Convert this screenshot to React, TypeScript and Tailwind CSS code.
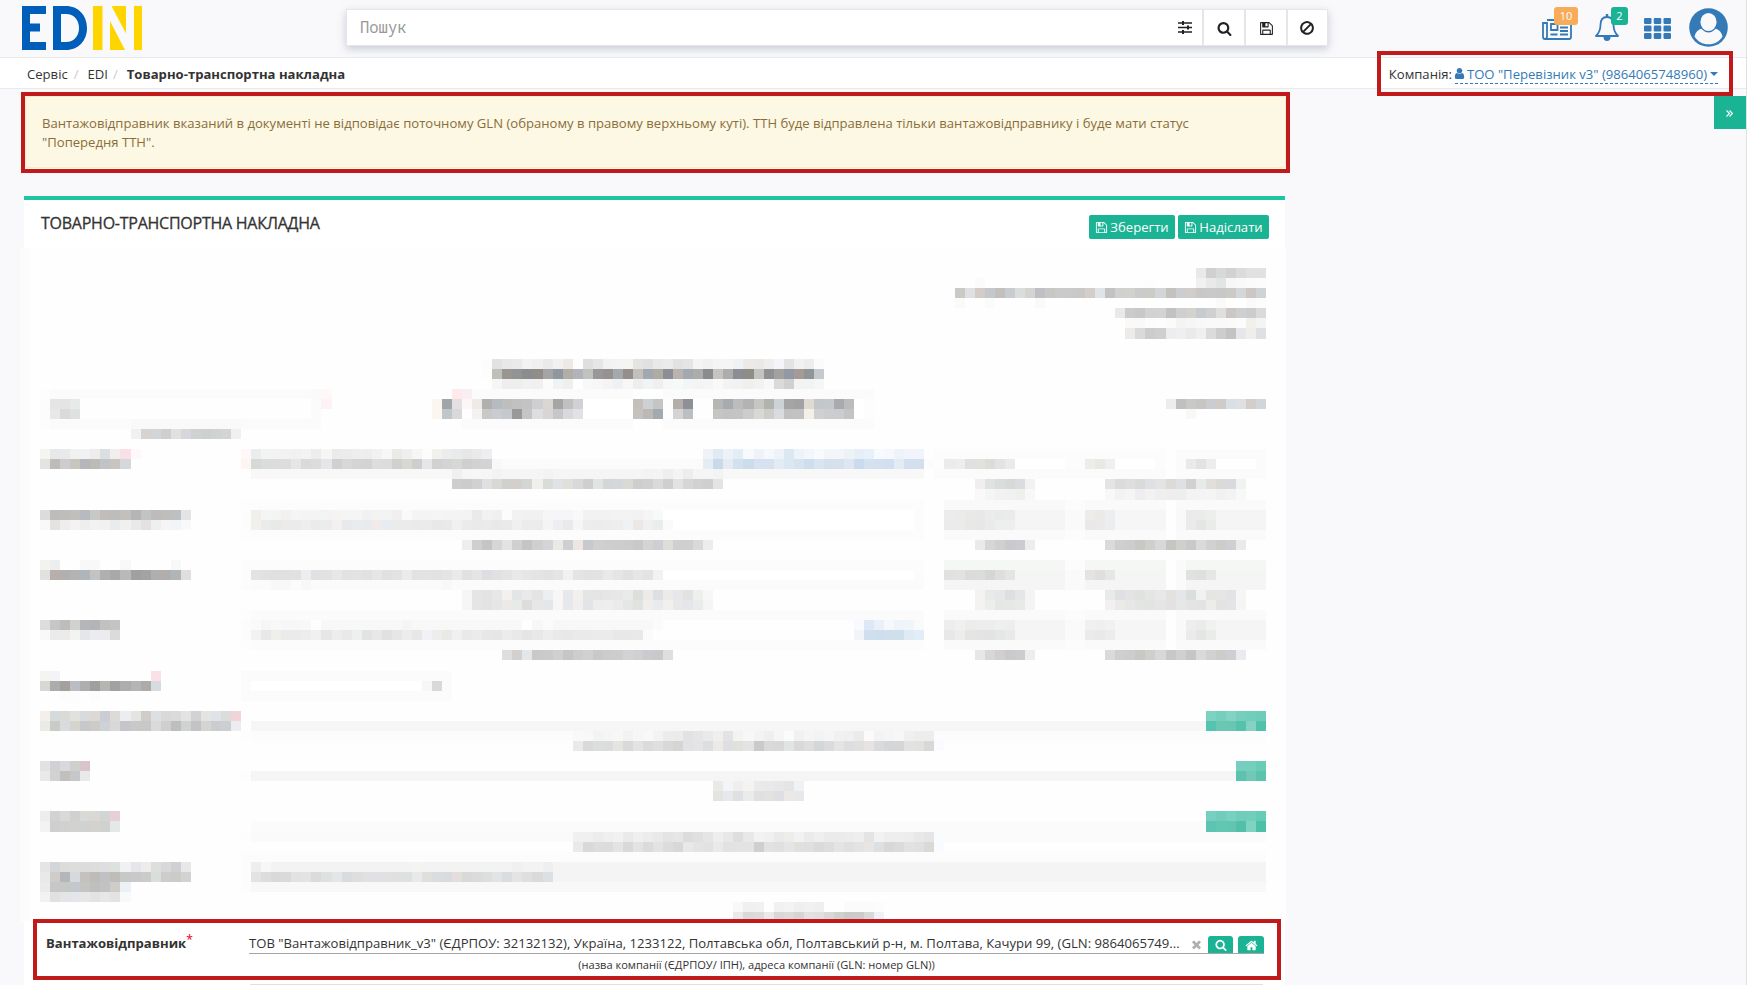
import React from "react";

const ICONS = {
  search:
    "M1216 832q0-185-131.5-316.5t-316.5-131.5-316.5 131.5-131.5 316.5 131.5 316.5 316.5 131.5 316.5-131.5 131.5-316.5zm512 832q0 52-38 90t-90 38q-54 0-90-38l-343-342q-179 124-399 124-143 0-273.5-55.5t-225-150-150-225-55.5-273.5 55.5-273.5 150-225 225-150 273.5-55.5 273.5 55.5 225 150 150 225 55.5 273.5q0 220-124 399l343 343q37 37 37 90z",
  floppy:
    "M512 1536h768v-384h-768v384zm896 0h128v-896q0-14-10-38.5t-20-34.5l-281-281q-10-10-34-20t-39-10v416q0 40-28 68t-68 28h-576q-40 0-68-28t-28-68v-416h-128v1280h128v-416q0-40 28-68t68-28h832q40 0 68 28t28 68v416zm-384-928v-320q0-13-9.5-22.5t-22.5-9.5h-192q-13 0-22.5 9.5t-9.5 22.5v320q0 13 9.5 22.5t22.5 9.5h192q13 0 22.5-9.5t9.5-22.5zm640 32v928q0 40-28 68t-68 28h-1344q-40 0-68-28t-28-68v-1344q0-40 28-68t68-28h928q40 0 88 20t76 48l280 280q28 28 48 76t20 88z",
  ban: "M1440 893q0-161-87-295l-754 753q137 89 297 89 111 0 211.5-43.5t173.5-116.5 116-174.5 43-212.5zm-999 299l755-754q-135-91-300-91-148 0-273 73t-198 199-73 274q0 162 89 299zm1223-299q0 157-61 300t-163.5 246-245 164-298.5 61-298.5-61-245-164-163.5-246-61-300 61-299.5 163.5-245.5 245-164 298.5-61 298.5 61 245 164 163.5 245.5 61 299.5z",
  user: "M1536 1399q0 109-62.5 187t-150.5 78h-854q-88 0-150.5-78t-62.5-187q0-85 8.5-160.5t31.5-152 58.5-131 94-89 134.5-34.5q131 128 313 128t313-128q76 0 134.5 34.5t94 89 58.5 131 31.5 152 8.5 160.5zm-256-887q0 159-112.5 271.5t-271.5 112.5-271.5-112.5-112.5-271.5 112.5-271.5 271.5-112.5 271.5 112.5 112.5 271.5z",
  home: "M1472 992v480q0 26-19 45t-45 19h-384v-384h-256v384h-384q-26 0-45-19t-19-45v-480q0-1 .5-3t.5-3l575-474 575 474q1 2 1 6zm223-69l-62 74q-8 9-21 11h-3q-13 0-21-7l-692-577-692 577q-12 8-24 7-13-2-21-11l-62-74q-8-10-7-23.5t11-21.5l719-599q32-26 76-26t76 26l244 204v-195q0-14 9-23t23-9h192q14 0 23 9t9 23v408l219 182q10 8 11 21.5t-7 23.5z",
  times:
    "M1490 1322q0 40-28 68l-136 136q-28 28-68 28t-68-28l-294-294-294 294q-28 28-68 28t-68-28l-136-136q-28-28-28-68t28-68l294-294-294-294q-28-28-28-68t28-68l136-136q28-28 68-28t68 28l294 294 294-294q28-28 68-28t68 28l136 136q28 28 28 68t-28 68l-294 294 294 294q28 28 28 68z",
};

function Icon({ name, className }: { name: keyof typeof ICONS; className: string }) {
  return (
    <svg viewBox="0 0 1792 1792" className={className} fill="currentColor">
      <path d={ICONS[name]} />
    </svg>
  );
}

/* Redacted form area. Each entry is one mosaic row: "column:shade shade*count ...",
   where a shade is a two-digit grey or a full hex colour. */
const MOSAIC: Record<number, string> = {
  2: "117:e9 d1d0cf d7dad8 d2 dadbdc e1 e1",
  3: "95:fb|112:fd|117:f1 e9e9ea e2e6e3 f7 f9 fb fc",
  4: "93:cbc9c6 dee0e3 d3ccc9 c5c8ca c2bfbc c8cccf dadddb d6d4d1 bfc0c4 c9c7c3 c9cbc9 c9 c8 d5cdc7 dfe4e9 c4c1c3 cfd1cf d1d1ce cb caccc8 d4d5d7 c4c2bf cbcdce d0cdca c8 c9 c8 cccac7 d4d6d8 ccc7c4 d0d3d5",
  5: "93:fa|96:fafcfb|101:fa|119:fa|122:fa fc",
  6: "109:e9 cacccb c8 d2 d3 c3c2c2 cfd0ce d4d2cf c8cbce d0 dfdfdd ccc7c4 cecfce cbcccd da",
  7: "110:faf9f8 f8f9f8 fc fd fb f4f4f2 f6 f8 f9 f9 fa fc f1f0ed f4f4f5",
  8: "110:ecebe9 dadad8 cc cf ecedee efeff1 ebeaea f0 dbdbd9 cccdcf c5c3c2 e6e7ea f0eeea dee0e3",
  11: "46:fdfcfa e1e2e3 e8 ebeae8 f3 f0 ebeaea eff1f3 ece9e7 fd df e6 f2 f3 f4f4f2 e5e4e3 dfe1e2 ebe9e7 eb e2 e4e5e6 f4 eff1f3 f5 f5 f0f1f3 ede9e7 ebe9e7 ee f4f5f8 e3 f2f1ef ed fafbfd",
  12: "46:fd c0c0bb 999593 929395 8b8c8e 918e8a a5a4a4 8f98a1 b2ada6 b3b4bb c0c2c0 989898 969190 a5a9ac 948f8d c2c0bb a0a9b1 aeaba3 8c8e94 b9b2ae a3a9ae ac 898b8e c5c4c3 adadab 8a8d94 8e8c87 c3c3c1 909192 a3a19f 9299a3 a59b96 909597 c6c9ce",
  13: "47:f6 ee eeeeec f1 f0 fb eff3f6 eff0ec fe f8 f7 f4 eef1f3 f8f6f6 eeeeec f1f4f7 ef f7 f6faf8 f2f6f4 f4 f5 f8faf8 f3 f2 efefec f2 f8 dbdad8 d0 f3 f2f4f3 f6",
  14: "2:fd fb*26 fa fff7f8|43:ffe9ea f8eef4 fb*16|64:fb*21",
  15: "2:fc e5 e4 e8eae9|29:fb fdf3f6|41:fcf5f0 9fa5a9 e5dfe1 fdf6f7 eeebe6 b0b0ae b5bbc1 be c1 c3c3c4 cdcfd1 d9d7d4 a5 c0 cfd1d4 ff*5 c5bfba cdd1d4 c4c5c5 fd b3aeaa 8d9195 fe fe b8b6b2 a8abae bcbcbe b3 c7c6c4 b2b2af cdd2d6 a5 a2 e1dad2 c4c7ca c5c8cb a9aaad bc ff fd|114:ed c0 c9c9c7 c8c6c4 cacccf d0cbc7 dadfe4 dee0e4 d5cdc9 d0d6da",
  16: "2:fc e8 dbdad9 dfe1e0|29:fb|41:fcf6f1 c1c7c8 d8d9da fe f2 cac8c6 c9ccd0 c5c8cc 999998 c5c5c7 dedee0 d8d6d4 c7c7c9 d9d9dd e2 ff*5 c6c1bd bbb8b5 a3aaaf fd d4 bdbebf fe fe c5 c3 c4 cd d8d8d4 cdcdca dadbde c1 c2 f5efe9 d0 cccdce cacccf c4 ff fd|116:f8",
  17: "2:fd fb*8 f9*11 fb*8|44:fb*17|64:fb*21",
  18: "11:f1 d5d4d3 d3d6d9 cf e3e1df d5d7da cfd1d2 ccd0cf d1d2d2 d3d5d4 f0",
  20: "2:f5f4f2 e6e8ea e9e9eb f1f2f0 eff1f3 eeedeb dbdfe3 f0efed f9e0e6 fef8fa|22:fef9f8 eaecee f3 f3 f2 f1 f3 ed f6 eb ec ee ed f1 f7 eaeae7 ef f6 fc f3f1ee ec e8eaeb e7 ea eceeef|68:eff3f8 dfeaf3 ecf2f8 e2edf4 f7f9fc edf3f9 f5f9fc edf3f8 dbe8f2 edf4f9 f2f7fb f8fafd f3f6f9 f2f5f9 edf2f7 e6eff7 e8f0fa f8fbfe f5f9fd edf3f9 f1f5fb f1f5fb|91:fc*23|115:fb*9",
  21: "2:e3e3e0 bebbb9 cdcdd0 c8c5bf b6b7bd bdbbb8 c2c3c6 c9c4c0 d4d8dd|22:fcf5f2 d5d9da dadcdc dbdddc dfdddc e5e7e6 dadbd8 dbdddd e5e6e9 cfd0d0 d8d8d9 d3d5d3 d2d3d5 dcddde dadcdd d0d0ce d8d7d4 cdcfce e5e6e9 d1 d2d4d5 d7d7d3 cf d3d2cf d3 f6f8fb fb*20 e5edf4 c8daea e4ebf3 d3e0ee cbdceb d6e2ef d7e2ef e4ecf3 dbe8f1 d7e3ed cddfee d8e4ef d4e0ec d6e1ee dde6f1 c9dbed d4e1ef d3e0f0 d0e0f0 e3ebf4 d2e0f0 d3dfed fbfdfd fd ebebe9 efedeb e0e1de e1e1de dddcda e3e4e2 e9ebe9 ff*5 fc fc eeece8 e9e8e5 efeff0 ff*4 fc fe fb ea e2e2e0 ebeeec ff*4 fb",
  22: "23:f8*20 f0 f6 f7 f6 f3 f5*4 f3 f5*9 f3 f4 ee f4 ed f5 f5 f3 f8*20|91:fb*23|115:fb*9",
  23: "43:cfcdd0 cccdcb d0d2d1 dfe0e1 d8d8d5 d0d0ce d2cfcc d4d6d6 efefeb dadcd9 e0e3e6 e1dfdc d7dad9 cf e2e4e4 d5d6d6 d5d8db d9d9d6 ce cfd1d0 d8dbd8 cf e1e2e1 d5d6d9 d1 cf e2e4e5|95:f0eeee dfe1e2 dbdddb d5d9d7 dadcdf f2|108:e3e4e3 dadbda de da dfe0e3 e4e5e2 dcdbd9 dfe0e4 d1d1d0 e6eae8 e0dfdc dadad7 d9dadf f1f3f1",
  24: "95:f9 f5 f2 f1 eef0ee f8|108:f8 f4f3f0 f5 efedef f2 ef ee ee f3 f4 f5 f1 f3 f8",
  25: "22:fd fc*67|92:f9*12 fc*2 fa*8|115:fa*9",
  26: "2:dc bebcbb bfbdbb c0bfbc b7bbbf c8c8c9 c0bdbb bdbdbc c1c0bd b5 c2c4c3 bebcbb bfbebd bdc0c1 e4|22:fc f1efec f3f6f4 f3f5f3 f1 f4f6f5 f4 f4 f3 f5f4f2 f5 f5 f1 f3 f3 f0 fa f4 f4 f5 f4 f4 f3 ea f2 f0 fc f2 f1 f1 f6 f4f6f9 f6 f9 f2 f2 f2 f3 f3 f2 f5 f6faf8 ff*25 fc|92:ec ecebe9 e9e9e7 e8e9e7 ebedec ea eb f5*5 fa*2 ecece8 ebeae8 eceeef f6*5|115:f9 eb ebebea edefed f5*5",
  27: "2:f9 e3 ee f4f3f1 ee f2 f1 eaebec f0 e9 e2 edf0ee f5 f1f5f8 f9|22:fc f2f0ed e9eceb e8eae9 ecebea eb ee eb ec f3f0ef e8e9ed e9ebed e8eaed f0ebea e8ebf0 eb eb ea eaeceb e8 e8eaea f0 eb ea eb e9 ea f0 ec ec f4 ee e9e9eb f5 ed ec ed ee eef2f5 ece8e5 f0 ec fa ff*24 fc|92:eb ecebe9 e8 e7 ea ecefed ecefed f5*5 fa*2 eae9e7 ea ebedee f6*5|115:f9 eb e4e5e4 eaecea f5*5",
  28: "22:fd fc*67|92:fa*12 fc*2 fa*8|115:fa*9",
  29: "44:ee cf c5 d6 e4e3e1 ced0d2 c5 cdcfd0 d4d5d8 e9e9e7 cdcfd3 eee6e3 c7c9cc d0 cfcecd cd cc c9 d5d4d0 cecfd3 deddd8 cf cf d9dad8 ed|95:ebeae8 d5d6d6 d2cfcf c9cacd cbcccf ed|108:da cdd0cf cccdcc c9c8c5 ced0ce d6d8d9 c6c5c2 cfcfce c8cac9 d8dadc d1d1cf cdccc9 cecfd1 e9ebe9",
  31: "2:f4f2ef eceef0|6:f8 f8|10:f8|15:f8|22:fc*68|92:f5f7f5*12 fc*2 f5f7f5*8|115:fa f5f7f5*8",
  32: "2:e1 b6afab b1b0ae b5b3b1 b0b5b9 c3 b2b0ae a8a9aa b9b9b7 a0 a3 b0aeae b1aeac b0b5b8 df|22:fc e4e3e3 e0e2e1 dfe1df e0 e1 ed dfe1e5 e2 e7 e2 e3 dfe1e4 e6 e1 e3 eb e2 e1e4e3 e2 e4 e8ebea e1 e5 dddee2 e1 e4 e9 e5e7e7 e4 e2 e5 eff2f0 e4 e0e2e3 e5e3e2 e9 e5 e1 e6 e3 f2 ff*25 fc|92:e1 e3e2e0 db dbdcdc d7d6d5 de e3e4e3 f5*5 fa*2 e3 e0dfde e5e6e6 f5*5|115:fa e1e1df df e4e7e4 f5*5",
  33: "22:fc fb fb f8 f8 fb f8 fb*13 f8 fb*47|92:f5*12 fa*2 f5*8|115:fa f5*8",
  34: "44:f6 e5 e3 e7 f3f1ef e3e6e9 e9 e4 eceef2 f7 e6e8ea f2f0ee e4e5e4 e4 e6 e7 e9ebea dedfdd ecebe8 dddfe2 ecebe7 e5e7ea e1e2e1 eef0ed f5f8f6|95:f5f3f1 e8eae9 e6e7e8 dfdfe1 e4e6e7 f4|108:e8eae9 dfe0e3 e3 e0e2e0 e4e6e6 e8 e3e2df e4e6ea dcdedb eef2f0 e5e5e2 e6e6e3 e1e3e6 f6",
  35: "44:f6 e4e6e5 e3 e5e7e6 eceae7 e8eae8 dddedc e7 e4e7ea f6 e6e8eb f1efee e3e4e7 ed ee eb e5e7e6 e1e3e1 efeeec e9eaed f1f0ed e8 e5e6ea eb f5|95:f5f3f1 eceeed e5e7e5 e6e8e7 e8eae8 f4|108:f1 ebeae9 e7 e3e5e2 e3e4e1 e5 e2 e7 e4 e3 ececea e3e4e1 e2e4e6 f5",
  36: "22:fd fb*67|92:fa*12 fc*2 fa*8|115:fa*9",
  37: "2:dedddc c6 bfbcba d0d2d0 b6b6b8 b4b4b8 c2c1bf c5c4c4|22:fc fa f6 f8 f7 f7 f8 fe f8*8 f5 f8*11 fe f7 fb f7 f8 f8*8 fb|83:f7fafe dce8f5 eaf0fa f6f8fd eff4fb f0f5fb f8fafc|92:ed eff0ef ec ed ed ef edefee f5*5 fa*2 f1f0ee ef eff1f3 f6*5|115:f9 ee ebebea f0f2f0 f5*5",
  38: "2:f9 eb ecebe9 f3 e5e6e7 ebecef ececee db|22:fc f2 e6e9e8 f0efec eb eb ed f0 e6e6e8 ed ebe9e7 edf0ee e2e4e3 e8 e1 e6 ec e7 f0f2f5 ed ebe9e6 f0 e9 eb e6e8e6 e6 ec e9 e5 e8 ed e9 e8 ea ea eb eb e8 e8 e9 fb|83:f1f5f9 cfdfed cddeec cfdfeb d0dfec e0eaf4 e2edf7|92:e8 ededeb e5e6e4 e4 e3 e5e7e6 e9 f5*5 fa*2 eb e9 ec f6*5|115:f9 eb e4e5e4 eaecea f5*5",
  39: "22:fd fc*67|92:fa*12 fc*2 fa*8|115:fa*9",
  40: "48:dededc d2d1cf e4e7e9 c9c9c6 cdcbca d0 c6c6c8 cd cfd1d3 c9 cc cd d2d3d6 d0 c9cbcf c9 dedfe0|95:e8e7e5 d6d7d7 d2cfce c9cac9 cbcccf ebeeec|108:da cdd0cf cccdcc c9c8c5 ced0ce d6d8d9 c9c8c5 d0 c5c6c7 d8dadc d1d1cf cdccc9 cecfd1 e9ebee",
  42: "2:f4f5f2 f3f4f8|13:fbe1e6|22:fb*21",
  43: "2:d7d7d6 ac a3a19c babdc4 ae 9f9f9f b6b5b1 a1a1a3 ad b3b5b9 aeaaa7 d5dbdf|22:fb ff*17 f7 d9 fb",
  44: "4:fc fc|7:fc|22:fb*21",
  46: "2:f3efed d6dadc dadad8 e2e1dd d9dadd dbd8d6 cacdd3 dddbd7 ecedef e5e4e2 cfcdca dde0e2 d8d9d9 db e3e4e1 d0d2d3 e4e4e2 dfe2e6 dbdddd f1d3da|118:7dd3c2 75cfbd 80d3c5 76cfbe 70cebb 6dcdba",
  47: "2:ebeae7 c9cbc7 d9dbde d5d4cf c6c8cc cdcbc8 ced1d6 d8 c4c6c9 c8cac8 cac8c6 da cdcfd0 be d0d1d3 c2c3c5 d4d4d1 cacccf cccfd2 ecedf0|23:f6*95 56c3ae 69c7b4 68c6b1 55c2ac 85d2c2 50c1aa",
  48: "22:fd fc*32 f9 f8 f3 f5 f7 f2 f6 f8 f3 ec eb e2 e5 ea ef e3 f2f4f3 f7 f3 ef f6 fb f1 f5 f3 f5 f0f2ef f0 eb fa f3 f5 f7 f0 ed ed fc*33",
  49: "55:eaeae8 d9 dcdedd dadcde e4e4e1 d8dad9 e3e3e1 db dee0dd d8 d5d6d3 e1e2e5 e4e4e6 dddee0 ece9e7 dedfe2 e0e0dd e3 c9cbcb d9 d9d8d9 e0e4e3 d9 dddedd d3d7d9 dbdbde e4 dcdee0 e0e0de e9e2e3 d8dadb d5d6d9 d6 e2e2e3 e2e1de d8d8d6 f9fbff",
  51: "2:e3e2e0 cfd1d4 d8d9dc cfd0ce dbc3cb|121:76cfbe 75cfbe 6accb7",
  52: "2:eae9e8 d2 c2bfbd c6c7cb e7e9eb|22:fd f5*98 5bc2ad 71c9b5 5cc3ad",
  53: "69:ebe9e7 f3f4f8 ef f4f3f0 ea eae9e9 e6e7e6 e4e5e4 f0f1f5",
  54: "69:e4e3e1 e6e8ea dfe0e2 eb e0 e2e3e1 dddfe3 ece8e6 e6e8ea",
  56: "2:eeedeb d1d2d2 d9 d0d1cf d8dad8 dad8d5 d3d5d4 e6cfd5|118:76d0bf 70cdbb 78d0c0 70cdbb 70cebb 67ccb7",
  57: "2:f3 cf d0d2d2 d2d3d0 d1 d3d2cf d0d2d0 e4e8e9|23:fb*95 5cc4b0 63c6b2 62c5b1 52c0a9 80d2c2 4dc0a8",
  58: "22:fd fa*32 f0 f0 ec ef f1 ea ef ec e9 e4 e6 dc e0 e5 ee e8 dddedf e8 f2 f0 ea eceeec f2 eb ef eb eb ec ee e4 f2 ee ee ed e8 e5 fafbfd fb*32",
  59: "55:eaeae8 d9 dcdedd dadcde e4e4e1 d8dad9 e3e3e1 db e2e4e2 dc d8 e8 e4 e2 ece9e7 e2 e3 e3 cdd0cf e0e3e0 e0 e5 e0e0dd df d8dadd dd e4 e0 e3 e9e5e3 dddfe1 d8 d9dbdc e2 e0 dad9d5 f9fbff",
  60: "22:fc*102",
  61: "2:e6e5e3 d3d6d9 dddcda dd dc dd de dde2e1 f1 e5e6e9 ececea de d8 cfd0d4 e8|22:fc ee f6f7f6 f3*14 f4f4f0 f3*9 f0 f3 f3 ef f4*71",
  62: "2:e9 cfcdca b4b6b9 d6d9dd c5c2be bdbcbb bfc1c5 bfbdba c7c9c8 c9 cb dadeda cd cbcbca d2|22:fc e3 dcdedd d7dad8 d9dad9 e2 e3 d9dbdc dee0e1 e4e7e6 dadbde de e1 dfe1e5 e3e1df e0 dde1df e9 e0dfdd dbdcdf d9dbde e3dedb d9dad7 db dcdfdd e1e3e6 dbdce0 e3e5e4 df dadbd9 dde0e3 f4*71",
  63: "2:eb c7 c6c8c6 c4c7cb c4c4c2 bfbfbc c2 cfcdca ecf1f5|22:fc f8*101",
  64: "2:f2 e1 e5 e5e6e9 e7 e2e3e6 e7 e3 f8f9fb",
  65: "71:f8 f0 f1 fd f1 f3 ef f1 ef|82:fb fb fb fc",
  66: "71:eae8e8 d9 db e9 d8 dadcda d6d5d3 e0e2e4 e0 d8 cfd1cb ca cb d8 eef1f5",
};

const COLUMN = 10.0485;
const ROW = 10.0605;
const COLUMNS = 126;
const ROWS = 67;

type Run = { width: number; color: string };

function parseRow(source: string | undefined): Run[] {
  const cells: string[] = new Array(COLUMNS).fill("#fefefe");
  cells[0] = "#fcfcfc";
  for (const part of (source ?? "").split("|").filter(Boolean)) {
    const [start, body] = part.split(":");
    let column = Number(start);
    for (const token of body.split(" ")) {
      const [shade, count] = token.split("*");
      const color = "#" + (shade.length === 2 ? shade.repeat(3) : shade);
      for (let i = 0; i < Number(count ?? 1) && column < COLUMNS - 2; i++) cells[column++] = color;
    }
  }
  const runs: Run[] = [];
  let from = 0;
  for (let c = 1; c <= COLUMNS; c++) {
    if (c === COLUMNS || cells[c] !== cells[from]) {
      runs.push({ width: Math.round(c * COLUMN) - Math.round(from * COLUMN), color: cells[from] });
      from = c;
    }
  }
  return runs;
}

function RedactedForm() {
  return (
    <div className="-ml-1 w-[1266px]" aria-hidden="true">
      {Array.from({ length: ROWS }, (_, n) => (
        <div key={n} className="flex" style={{ height: Math.round((n + 1) * ROW) - Math.round(n * ROW) }}>
          {parseRow(MOSAIC[n]).map((run, i) => (
            <div key={i} className="shrink-0" style={{ width: run.width, backgroundColor: run.color }} />
          ))}
        </div>
      ))}
    </div>
  );
}

function Logo() {
  return (
    <svg viewBox="0 0 120 44" className="mt-1.5 ml-[22px] h-11 w-[120px]">
      <path fill="#005ebb" d="M0 0h24v8H8v9.500h10v8H8V36h16v8H0z" />
      <path
        fill="#005ebb"
        fillRule="evenodd"
        d="M31 0h13c12 0 21 9 21 22s-9 22-21 22H31zM39 8v28h5c8 0 13-6 13-14S52 8 44 8z"
      />
      <path fill="#ffd500" d="M71 0h9.500v44H71zM89.500 0H104v27.500zM88 15v29h15zM112 0h8v44h-8z" />
    </svg>
  );
}

function SearchBar() {
  return (
    <div className="mt-[9px] ml-[204px] flex h-[37px] w-[982px] shrink-0 border border-[#e5e6e7] bg-white text-[#222] shadow-[0_3px_8px_rgba(110,120,150,0.35)]">
      <div className="flex flex-1 items-center pl-[13px] font-['Noto_Sans_Mono','DejaVu_Sans_Mono',monospace] text-[15.5px] text-[#999]">
        Пошук
      </div>
      <div className="flex w-[35px] items-center justify-center pl-px">
        <svg viewBox="0 0 14 13" className="h-[13px] w-3.5" stroke="currentColor" strokeWidth="1.5">
          <path d="M0 2h14M0 6.500h14M0 11h14" />
          <path strokeWidth="2" d="M5 0v4M10 4.500v4M5 9v4" />
        </svg>
      </div>
      <div className="flex w-[42px] items-center justify-center border-l-2 border-[#e5e6e7] pt-0.5">
        <Icon name="search" className="h-[15px] w-[15px]" />
      </div>
      <div className="flex w-[42px] items-center justify-center border-l-2 border-[#e5e6e7] pt-px">
        <Icon name="floppy" className="h-[15px] w-[15px]" />
      </div>
      <div className="flex w-[41px] items-center justify-center border-l-2 border-[#e5e6e7] pt-px pr-px">
        <Icon name="ban" className="h-4 w-4" />
      </div>
    </div>
  );
}

function TopIcons() {
  return (
    <div className="ml-auto flex pr-[18px] text-[#337ab7]">
      <div className="relative mt-[19px] h-[21px] w-[30px]">
        <svg viewBox="0 0 30 21" className="h-[21px] w-[30px]" fill="none" stroke="currentColor" strokeWidth="1.800">
          <path d="M5 1h24v17q0 2-2 2H3q-2 0-2-2V4h4v13.500q0 2.500-2 2.500" />
          <path d="M9 5h6.500v6H9z" />
          <path d="M18 5h8M18 8.500h8M18 12h8M8.500 15.500h7M18 15.500h8" />
        </svg>
        <span className="absolute -top-3 left-3 flex h-[18px] w-6 items-center justify-center rounded-[3px] bg-[#f8ac59] text-[11px] text-white">
          10
        </span>
      </div>
      <div className="relative mt-3.5 ml-[23px] h-[27px] w-6">
        <svg viewBox="0 0 24 27" className="h-[27px] w-6" fill="none" stroke="currentColor" strokeWidth="1.800">
          <path d="M12 0v3" strokeWidth="2.500" />
          <path d="M12 3C7 3 5.500 7 5.500 11c0 6-2 8.500-4.500 11h22c-2.500-2.500-4.500-5-4.500-11C18.500 7 17 3 12 3z" strokeLinejoin="round" />
          <path d="M8.500 23a3.500 4 0 0 0 7 0z" fill="currentColor" stroke="none" />
        </svg>
        <span className="absolute -top-[7px] left-4 flex h-[18px] w-[17px] items-center justify-center rounded-[3px] bg-[#1ab394] text-[11px] text-white">
          2
        </span>
      </div>
      <svg viewBox="0 0 27 21" className="mt-[18px] ml-[25px] h-[21px] w-[27px]" fill="currentColor">
        {[0, 1, 2].map((r) =>
          [0, 1, 2].map((c) => <rect key={`${r}${c}`} x={c * 9.75} y={r * 7.5} width="7.500" height="6" rx="1.200" />)
        )}
      </svg>
      <svg viewBox="0 0 39 39" className="mt-2 ml-[18px] h-[39px] w-[39px]">
        <circle cx="19.500" cy="19.500" r="19.300" fill="#337ab7" />
        <path
          fill="#f9f9fb"
          d="M5.500 28.500c1-4.500 3.500-7 7.500-8 1.800 1.500 3.800 2.300 6.500 2.300s4.700-.8 6.500-2.300c4 1 6.500 3.500 7.500 8-3 5-8 7.800-14 7.800s-11-2.800-14-7.800z"
        />
        <ellipse cx="19.500" cy="14" rx="8.800" ry="9.700" fill="#f9f9fb" stroke="#337ab7" strokeWidth="1.400" />
      </svg>
    </div>
  );
}

function Breadcrumbs() {
  return (
    <div className="flex h-8 items-center border-y border-[#e7eaec] bg-white pt-px pl-[27px] leading-[14px] text-[#333]">
      <span>Сервіс</span>
      <span className="ml-[6px] text-[#ccc]">/</span>
      <span className="ml-[9px]">EDI</span>
      <span className="ml-[5px] text-[#ccc]">/</span>
      <strong className="ml-[9px]">Товарно-транспортна накладна</strong>
      <div className="ml-auto flex pr-[28px]">
        <span>Компанія:</span>
        <span className="-mb-[3px] ml-[3px] flex border-b border-dashed border-[#337ab7] pb-0.5 text-[#337ab7]">
          <Icon name="user" className="-ml-0.5 h-[13px] w-[13px]" />
          <span className="ml-px">ТОО "Перевізник v3" (9864065748960)</span>
          <svg viewBox="0 0 8 4" className="mt-[5px] ml-[3px] h-1 w-2" fill="currentColor">
            <path d="M0 0h8L4 4z" />
          </svg>
        </span>
      </div>
    </div>
  );
}

function ActionButton({ label, width }: { label: string; width: string }) {
  return (
    <button className={`flex h-6 items-center justify-center gap-0.5 rounded-[2px] bg-[#1ab394] pt-px text-white ${width}`}>
      <Icon name="floppy" className="h-[13px] w-[13px]" />
      {label}
    </button>
  );
}

export default function App() {
  return (
    <div className="relative flex h-[985px] w-[1747px] flex-col overflow-hidden border-r border-[#dfe0e2] bg-[#f9f9fb] font-['Open_Sans',sans-serif] text-[13.1px] text-[#333]">
      <header className="flex h-[57px] shrink-0 items-start">
        <Logo />
        <SearchBar />
        <TopIcons />
      </header>
      <Breadcrumbs />

      <div className="flex items-start">
        <main className="mt-[3px] ml-[21px] w-[1269px]">
          <div className="h-[81px] border-4 border-[#c01a1a] bg-[#fcf8e3]">
            <div className="h-[72px] rounded-[4px] border border-[#faebcc] px-4 pt-[17px] leading-[19px] text-[#8a6d3b]">
              Вантажовідправник вказаний в документі не відповідає поточному GLN (обраному в правому верхньому куті). ТТН
              буде відправлена тільки вантажовідправнику і буде мати статус
              <br />
              "Попередня ТТН".
            </div>
          </div>

          <section className="mt-[23px] ml-[3px] w-[1261px] border-t-4 border-[#1dc5a3] bg-white">
            <div className="flex h-12 items-start justify-between pr-4 pl-[17px]">
              <h1 className="pt-[11px] text-[16px] leading-6 font-medium tracking-[-0.25px] [-webkit-text-stroke:0.3px]">
                ТОВАРНО-ТРАНСПОРТНА НАКЛАДНА
              </h1>
              <div className="flex gap-[3px] pt-[15px]">
                <ActionButton label="Зберегти" width="w-[86px]" />
                <ActionButton label="Надіслати" width="w-[91px]" />
              </div>
            </div>
            <RedactedForm />
            <div className="relative z-10 -mt-[3px] ml-[9px] flex h-[61px] w-[1248px] border-4 border-[#c01a1a] bg-white">
              <div className="flex w-[212px] items-start pt-[10px] pl-[9px] leading-[20px] font-bold">
                Вантажовідправник
                <span className="-mt-[3px] text-[12px] font-semibold text-[#ed1c40]">*</span>
              </div>
              <div className="w-[1015px]">
                <div className="flex h-[31px] items-end border-b border-[#a5a5a5]">
                  <span className="w-[932px] pb-px leading-[17px] whitespace-nowrap">
                    ТОВ "Вантажовідправник_v3" (ЄДРПОУ: 32132132), Україна, 1233122, Полтавська обл, Полтавський р-н, м.
                    Полтава, Качури 99, (GLN: 9864065749...
                  </span>
                  <Icon name="times" className="mb-0.5 ml-[9px] h-[13px] w-[13px] text-[#b0b0b0]" />
                  <span className="ml-[5px] flex h-[17px] w-[25px] items-center justify-center rounded-t-[3px] bg-[#1ab394] pt-px text-white">
                    <Icon name="search" className="h-3 w-3" />
                  </span>
                  <span className="ml-[5px] flex h-[17px] w-[26px] items-center justify-center rounded-t-[3px] bg-[#1ab394] pt-px text-white">
                    <Icon name="home" className="h-[13px] w-[13px]" />
                  </span>
                </div>
                <div className="pt-[3px] text-center text-[11.1px] leading-4">
                  (назва компанії (ЄДРПОУ/ ІПН), адреса компанії (GLN: номер GLN))
                </div>
              </div>
            </div>
            <div className="mt-1 ml-[226px] h-px w-[1013px] bg-[#e0e0e0]" />
          </section>
        </main>
        <button className="mt-[7px] ml-auto flex h-[33px] w-8 items-center justify-center bg-[#1ab394] pt-px pr-px text-white">
          <svg viewBox="0 0 7 7" className="h-[7px] w-[7px]" fill="none" stroke="currentColor" strokeWidth="1.200">
            <path d="M.5.5l3 3-3 3M3.500.5l3 3-3 3" />
          </svg>
        </button>
      </div>

      <div className="absolute top-[51px] left-[1377px] h-[45px] w-[356px] border-4 border-[#c01a1a]" />
    </div>
  );
}
